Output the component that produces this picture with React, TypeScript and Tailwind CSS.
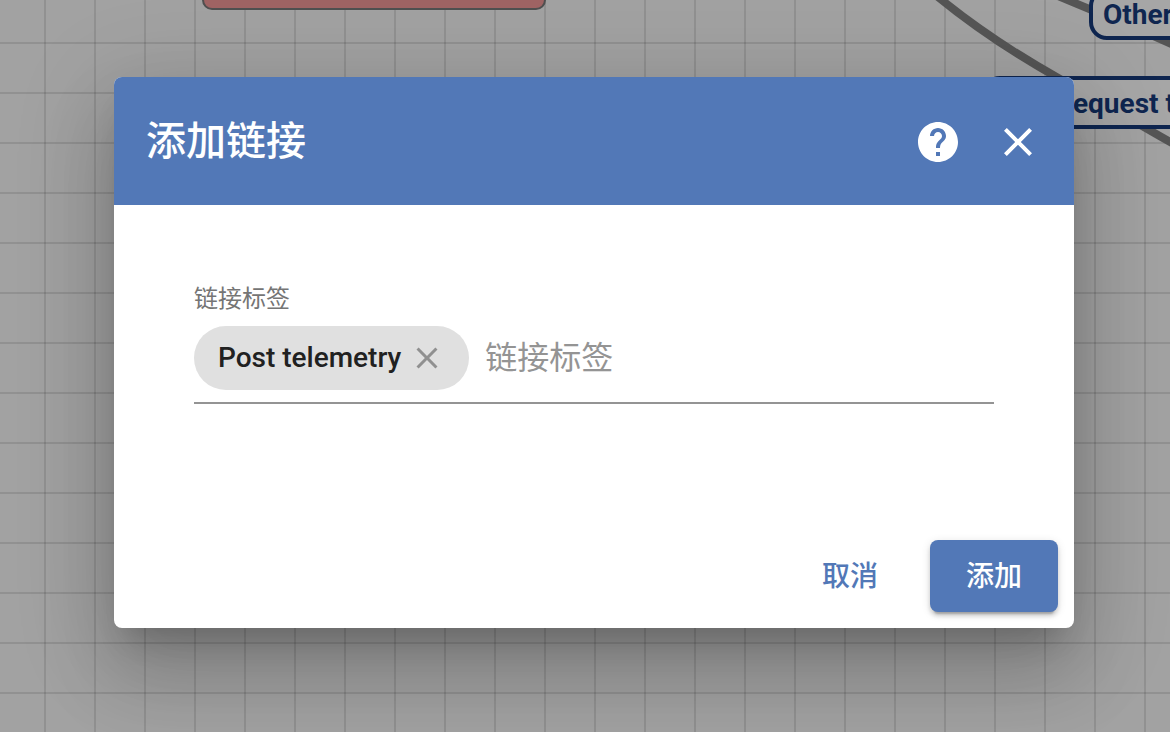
import { useState } from 'react';

const GraphCanvas = () => (
  <div
    aria-hidden="true"
    className="absolute inset-0 overflow-hidden bg-[#a2a2a2] bg-[linear-gradient(to_right,#0000001a_2px,transparent_2px),linear-gradient(to_bottom,#0000001a_2px,transparent_2px)] bg-[size:50px_50px] bg-[position:44px_42px]"
  >
    {/* Edges */}
    <svg className="absolute left-0 top-0" width="1400" height="300" fill="none" stroke="#555" strokeWidth="8">
      <path d="M932 -8C969 23 1010 51 1060 79C1105 104 1140 125 1200 159" />
      <path d="M1042 -11C1082 7 1130 24 1200 57" />
    </svg>

    {/* Nodes */}
    <div className="absolute left-[202px] -top-20 h-[90px] w-[344px] rounded-[10px] border-2 border-[#505050] bg-[#a06464]" />
    <div className="absolute left-[1089px] -top-3 flex h-[52px] w-40 items-center rounded-[18px] border-4 border-[#0f2650] bg-[#a6a6a6] pt-0.5 pl-2.5 text-[28px] font-bold text-[#0f2650]">
      Other
    </div>
    <div className="absolute left-[982px] top-[76px] flex h-[53px] w-80 items-center rounded-[18px] border-4 border-[#0f2650] bg-[#a6a6a6] pt-0.5 pl-[69px] text-[28px] font-bold whitespace-nowrap text-[#0f2650]">
      Request t
    </div>
  </div>
);

const CloseIcon = ({ className }: { className: string }) => (
  <svg viewBox="0 0 24 24" fill="currentColor" className={className} aria-hidden="true">
    <path d="M19 6.41L17.59 5 12 10.59 6.41 5 5 6.41 10.59 12 5 17.59 6.41 19 12 13.41 17.59 19 19 17.59 13.41 12z" />
  </svg>
);

const HelpIcon = () => (
  <svg viewBox="0 0 24 24" fill="currentColor" className="size-12" aria-hidden="true">
    <path d="M12 2C6.48 2 2 6.48 2 12s4.48 10 10 10 10-4.48 10-10S17.52 2 12 2zm1 17h-2v-2h2v2zm2.07-7.75l-.9.92C13.45 12.9 13 13.5 13 15h-2v-.5c0-1.1.45-2.1 1.17-2.83l1.24-1.26c.37-.36.59-.86.59-1.41 0-1.1-.9-2-2-2s-2 .9-2 2H8c0-2.21 1.79-4 4-4s4 1.79 4 4c0 .88-.36 1.68-.93 2.25z" />
  </svg>
);

const App = () => {
  const [labels, setLabels] = useState(['Post telemetry']);
  const [draft, setDraft] = useState('');

  const addLabel = () => {
    const value = draft.trim();
    if (value && !labels.includes(value)) setLabels([...labels, value]);
    setDraft('');
  };

  return (
    <div className="relative min-h-screen pt-[77px] pr-24 pb-[104px] pl-[114px] font-[Roboto,'Noto_Sans_CJK_SC',sans-serif]">
      <GraphCanvas />

      <div
        role="dialog"
        aria-labelledby="dialog-title"
        className="relative overflow-clip rounded-lg bg-white shadow-[0_22px_30px_-14px_rgba(0,0,0,0.2),0_48px_76px_6px_rgba(0,0,0,0.14),0_18px_92px_16px_rgba(0,0,0,0.12)]"
      >
        <header className="flex h-32 items-center bg-[#5278b7] px-8 pt-0.5 text-white">
          <h2 id="dialog-title" className="flex-1 text-[40px] leading-[48px] font-medium">
            添加链接
          </h2>
          <div className="flex gap-8">
            <button type="button" aria-label="帮助">
              <HelpIcon />
            </button>
            <button type="button" aria-label="关闭">
              <CloseIcon className="size-12" />
            </button>
          </div>
        </header>

        <div className="px-20 pt-20">
          <label htmlFor="link-label" className="block text-2xl leading-7 text-[#757575]">
            链接标签
          </label>
          <div className="mt-2 flex flex-wrap items-center gap-4 border-b-2 border-[#949494] pt-[5px] pb-3">
            {labels.map((label) => (
              <span
                key={label}
                className="flex h-16 items-center gap-2 rounded-full bg-[#e0e0e0] px-6 text-[28px] font-medium text-[#212121]"
              >
                {label}
                <button
                  type="button"
                  aria-label={`移除 ${label}`}
                  onClick={() => setLabels(labels.filter((l) => l !== label))}
                  className="text-[#909090]"
                >
                  <CloseIcon className="size-9" />
                </button>
              </span>
            ))}
            <input
              id="link-label"
              value={draft}
              onChange={(e) => setDraft(e.target.value)}
              onKeyDown={(e) => e.key === 'Enter' && addLabel()}
              placeholder="链接标签"
              className="min-w-0 flex-1 text-[32px] leading-10 outline-none placeholder:text-[#949494]"
            />
          </div>
        </div>

        <footer className="flex justify-end gap-4 px-4 pt-[136px] pb-4 text-[28px] leading-[70px] font-medium">
          <button type="button" className="rounded-lg px-9 pt-0.5 text-[#5278b7]">
            取消
          </button>
          <button
            type="button"
            onClick={addLabel}
            className="rounded-lg bg-[#5278b7] px-9 pt-0.5 text-white shadow-[0_6px_2px_-4px_rgba(0,0,0,0.2),0_4px_4px_0_rgba(0,0,0,0.14),0_2px_10px_0_rgba(0,0,0,0.12)]"
          >
            添加
          </button>
        </footer>
      </div>
    </div>
  );
};

export default App;
